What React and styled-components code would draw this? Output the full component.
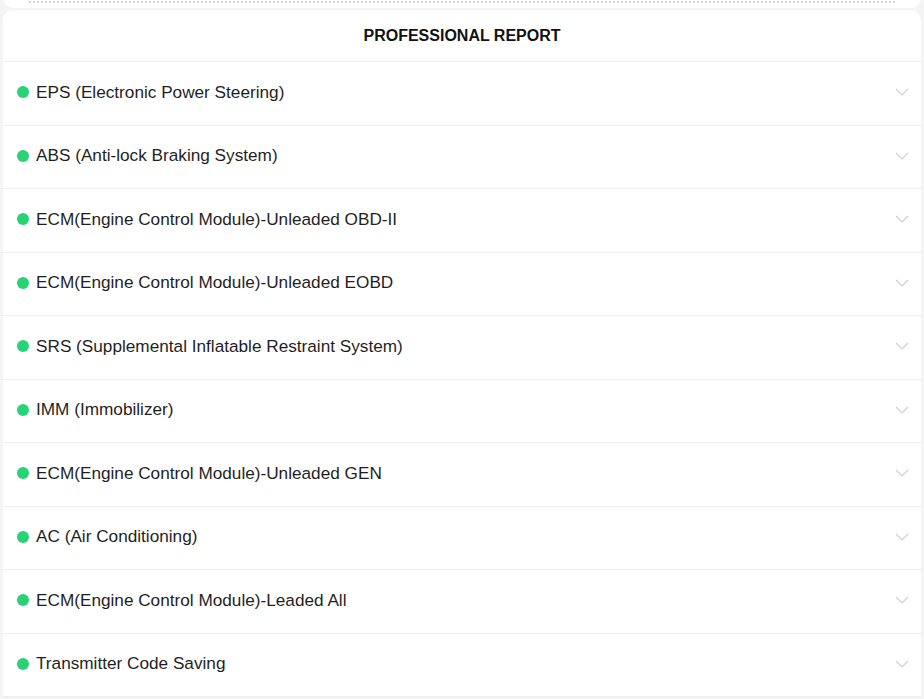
import React from "react";
import styled, { createGlobalStyle } from "styled-components";

const Global = createGlobalStyle`
  *, *::before, *::after { box-sizing: border-box; }
  html, body { margin: 0; padding: 0; background: #f4f4f4; }
  body { font-family: "Liberation Sans", Arial, sans-serif; }
`;

const Page = styled.div`
  width: 924px;
  height: 699px;
  overflow: hidden;
  background: #f4f4f4;
  display: flex;
  flex-direction: column;
  gap: 2px;
`;

const TopCard = styled.div`
  margin: -10px 3px 0;
  height: 18px;
  flex: none;
  background: #fff;
  border-radius: 0 0 10px 10px;
  display: flex;
  align-items: flex-end;
  padding: 0 26px 5px;
`;

const Dotted = styled.div`
  flex: 1;
  border-top: 2px dotted #d4d4d4;
`;

const Card = styled.div`
  margin: 0 3px;
  background: #fff;
  border-radius: 10px 10px 0 0;
  display: flex;
  flex-direction: column;
`;

const Header = styled.div`
  height: 52px;
  flex: none;
  display: flex;
  align-items: center;
  justify-content: center;
  font-weight: 700;
  font-size: 16px;
  color: #111;
  border-bottom: 1px solid #efefef;
`;

const Row = styled.div`
  height: 63.5px;
  flex: none;
  display: flex;
  align-items: center;
  padding: 0 12px 2px 14px;
  border-bottom: 1px solid #efefef;
`;

const Dot = styled.span`
  width: 12px;
  height: 12px;
  border-radius: 50%;
  background: #27d376;
  flex: none;
  margin-right: 7px;
`;

const Label = styled.span`
  flex: 1;
  font-size: 17.2px;
  color: #1f1f1f;
  white-space: nowrap;
`;

const Chevron = styled.svg`
  width: 14px;
  height: 8px;
  flex: none;
`;

const items = [
  "EPS (Electronic Power Steering)",
  "ABS (Anti-lock Braking System)",
  "ECM(Engine Control Module)-Unleaded OBD-II",
  "ECM(Engine Control Module)-Unleaded EOBD",
  "SRS (Supplemental Inflatable Restraint System)",
  "IMM (Immobilizer)",
  "ECM(Engine Control Module)-Unleaded GEN",
  "AC (Air Conditioning)",
  "ECM(Engine Control Module)-Leaded All",
  "Transmitter Code Saving",
];

export default function App() {
  return (
    <>
      <Global />
      <Page>
        <TopCard>
          <Dotted />
        </TopCard>
        <Card>
          <Header>PROFESSIONAL REPORT</Header>
          {items.map((t) => (
            <Row key={t}>
              <Dot />
              <Label>{t}</Label>
              <Chevron viewBox="0 0 14 8">
                <path d="M1 1 L7 7 L13 1" fill="none" stroke="#cfcfcf" strokeWidth="1.2" />
              </Chevron>
            </Row>
          ))}
        </Card>
      </Page>
    </>
  );
}
